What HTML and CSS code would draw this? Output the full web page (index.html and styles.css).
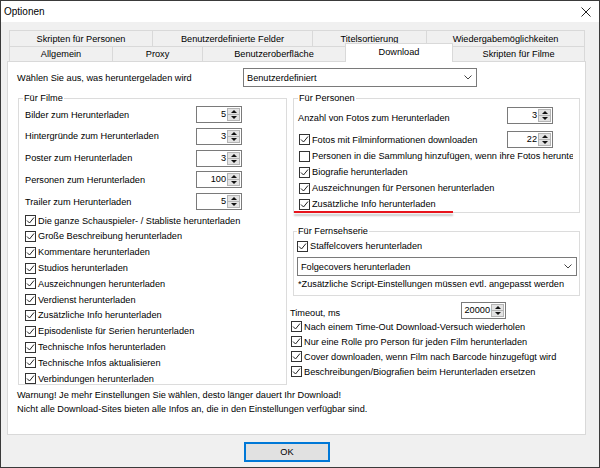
FILE: index.html
```html
<!DOCTYPE html>
<html lang="de">
<head>
<meta charset="utf-8">
<title>Optionen</title>
<link rel="stylesheet" href="styles.css">
</head>
<body>
<div class="window">
  <div class="titlebar">
    <span class="title">Optionen</span>
    <span class="close"><svg width="10" height="10" viewBox="0 0 10 10"><path d="M0.5 0.5L9.5 9.5M9.5 0.5L0.5 9.5" stroke="#222" stroke-width="1" fill="none"/></svg></span>
  </div>
  <div class="client">
    <div class="tabs">
      <div class="tabrow row1">
        <div class="tab t-skp">Skripten für Personen</div>
        <div class="tab t-bdf">Benutzerdefinierte Felder</div>
        <div class="tab t-tit">Titelsortierung</div>
        <div class="tab t-wie">Wiedergabemöglichkeiten</div>
      </div>
      <div class="tabrow row2">
        <div class="tab t-all">Allgemein</div>
        <div class="tab t-pro">Proxy</div>
        <div class="tab t-bob">Benutzeroberfläche</div>
        <div class="tab t-dl active">Download</div>
        <div class="tab t-skf">Skripten für Filme</div>
      </div>
    </div>
    <div class="panel">
      <div class="toprow">
        <span class="toplabel">Wählen Sie aus, was heruntergeladen wird</span>
        <div class="select sel-main"><span>Benutzerdefiniert</span><svg width="8" height="5" viewBox="0 0 8 5"><path d="M0.5 0.5L4 4L7.5 0.5" fill="none" stroke="#444" stroke-width="1"/></svg></div>
      </div>
      <div class="columns">
        <fieldset class="group g-filme">
          <legend>Für Filme</legend>
          <div class="spinrow"><span>Bilder zum Herunterladen</span><div class="spin"><span class="val">5</span><span class="arrows"><i class="up"></i><i class="down"></i></span></div></div>
          <div class="spinrow"><span>Hintergründe zum Herunterladen</span><div class="spin"><span class="val">3</span><span class="arrows"><i class="up"></i><i class="down"></i></span></div></div>
          <div class="spinrow"><span>Poster zum Herunterladen</span><div class="spin"><span class="val">3</span><span class="arrows"><i class="up"></i><i class="down"></i></span></div></div>
          <div class="spinrow"><span>Personen zum Herunterladen</span><div class="spin"><span class="val">100</span><span class="arrows"><i class="up"></i><i class="down"></i></span></div></div>
          <div class="spinrow"><span>Trailer zum Herunterladen</span><div class="spin"><span class="val">5</span><span class="arrows"><i class="up"></i><i class="down"></i></span></div></div>
          <div class="checks">
            <label class="chk"><span class="box"><svg width="9" height="9" viewBox="0 0 9 9"><path d="M1 4.5L3.5 7L8 1.5" fill="none" stroke="#222" stroke-width="1"/></svg></span>Die ganze Schauspieler- / Stabliste herunterladen</label>
            <label class="chk"><span class="box"><svg width="9" height="9" viewBox="0 0 9 9"><path d="M1 4.5L3.5 7L8 1.5" fill="none" stroke="#222" stroke-width="1"/></svg></span>Große Beschreibung herunterladen</label>
            <label class="chk"><span class="box"><svg width="9" height="9" viewBox="0 0 9 9"><path d="M1 4.5L3.5 7L8 1.5" fill="none" stroke="#222" stroke-width="1"/></svg></span>Kommentare herunterladen</label>
            <label class="chk"><span class="box"><svg width="9" height="9" viewBox="0 0 9 9"><path d="M1 4.5L3.5 7L8 1.5" fill="none" stroke="#222" stroke-width="1"/></svg></span>Studios herunterladen</label>
            <label class="chk"><span class="box"><svg width="9" height="9" viewBox="0 0 9 9"><path d="M1 4.5L3.5 7L8 1.5" fill="none" stroke="#222" stroke-width="1"/></svg></span>Auszeichnungen herunterladen</label>
            <label class="chk"><span class="box"><svg width="9" height="9" viewBox="0 0 9 9"><path d="M1 4.5L3.5 7L8 1.5" fill="none" stroke="#222" stroke-width="1"/></svg></span>Verdienst herunterladen</label>
            <label class="chk"><span class="box"><svg width="9" height="9" viewBox="0 0 9 9"><path d="M1 4.5L3.5 7L8 1.5" fill="none" stroke="#222" stroke-width="1"/></svg></span>Zusätzliche Info herunterladen</label>
            <label class="chk"><span class="box"><svg width="9" height="9" viewBox="0 0 9 9"><path d="M1 4.5L3.5 7L8 1.5" fill="none" stroke="#222" stroke-width="1"/></svg></span>Episodenliste für Serien herunterladen</label>
            <label class="chk"><span class="box"><svg width="9" height="9" viewBox="0 0 9 9"><path d="M1 4.5L3.5 7L8 1.5" fill="none" stroke="#222" stroke-width="1"/></svg></span>Technische Infos herunterladen</label>
            <label class="chk"><span class="box"><svg width="9" height="9" viewBox="0 0 9 9"><path d="M1 4.5L3.5 7L8 1.5" fill="none" stroke="#222" stroke-width="1"/></svg></span>Technische Infos aktualisieren</label>
            <label class="chk"><span class="box"><svg width="9" height="9" viewBox="0 0 9 9"><path d="M1 4.5L3.5 7L8 1.5" fill="none" stroke="#222" stroke-width="1"/></svg></span>Verbindungen herunterladen</label>
          </div>
        </fieldset>
        <div class="rightcol">
          <fieldset class="group g-pers">
            <legend>Für Personen</legend>
            <div class="prow prow1"><span class="plabel">Anzahl von Fotos zum Herunterladen</span><div class="spin"><span class="val">3</span><span class="arrows"><i class="up"></i><i class="down"></i></span></div></div>
            <div class="prow prow2"><label class="chk"><span class="box"><svg width="9" height="9" viewBox="0 0 9 9"><path d="M1 4.5L3.5 7L8 1.5" fill="none" stroke="#222" stroke-width="1"/></svg></span>Fotos mit Filminformationen downloaden</label><div class="spin"><span class="val">22</span><span class="arrows"><i class="up"></i><i class="down"></i></span></div></div>
            <div class="pchecks">
              <label class="chk clip"><span class="box"></span>Personen in die Sammlung hinzufügen, wenn ihre Fotos herunte</label>
              <label class="chk"><span class="box"><svg width="9" height="9" viewBox="0 0 9 9"><path d="M1 4.5L3.5 7L8 1.5" fill="none" stroke="#222" stroke-width="1"/></svg></span>Biografie herunterladen</label>
              <label class="chk"><span class="box"><svg width="9" height="9" viewBox="0 0 9 9"><path d="M1 4.5L3.5 7L8 1.5" fill="none" stroke="#222" stroke-width="1"/></svg></span>Auszeichnungen für Personen herunterladen</label>
              <label class="chk"><span class="box"><svg width="9" height="9" viewBox="0 0 9 9"><path d="M1 4.5L3.5 7L8 1.5" fill="none" stroke="#222" stroke-width="1"/></svg></span>Zusätzliche Info herunterladen</label>
            </div>
            <span class="mark"></span>
          </fieldset>
          <fieldset class="group g-tv">
            <legend>Für Fernsehserie</legend>
            <label class="chk"><span class="box"><svg width="9" height="9" viewBox="0 0 9 9"><path d="M1 4.5L3.5 7L8 1.5" fill="none" stroke="#222" stroke-width="1"/></svg></span>Staffelcovers herunterladen</label>
            <div class="select sel-tv"><span>Folgecovers herunterladen</span><svg width="8" height="5" viewBox="0 0 8 5"><path d="M0.5 0.5L4 4L7.5 0.5" fill="none" stroke="#444" stroke-width="1"/></svg></div>
            <div class="note">*Zusätzliche Script-Einstellungen müssen evtl. angepasst werden</div>
          </fieldset>
          <div class="timeout">
            <div class="trow"><span class="tlabel">Timeout, ms</span><div class="spin"><span class="val">20000</span><span class="arrows"><i class="up"></i><i class="down"></i></span></div></div>
            <label class="chk"><span class="box"><svg width="9" height="9" viewBox="0 0 9 9"><path d="M1 4.5L3.5 7L8 1.5" fill="none" stroke="#222" stroke-width="1"/></svg></span>Nach einem Time-Out Download-Versuch wiederholen</label>
            <label class="chk"><span class="box"><svg width="9" height="9" viewBox="0 0 9 9"><path d="M1 4.5L3.5 7L8 1.5" fill="none" stroke="#222" stroke-width="1"/></svg></span>Nur eine Rolle pro Person für jeden Film herunterladen</label>
            <label class="chk"><span class="box"><svg width="9" height="9" viewBox="0 0 9 9"><path d="M1 4.5L3.5 7L8 1.5" fill="none" stroke="#222" stroke-width="1"/></svg></span>Cover downloaden, wenn Film nach Barcode hinzugefügt wird</label>
            <label class="chk"><span class="box"><svg width="9" height="9" viewBox="0 0 9 9"><path d="M1 4.5L3.5 7L8 1.5" fill="none" stroke="#222" stroke-width="1"/></svg></span>Beschreibungen/Biografien beim Herunterladen ersetzen</label>
          </div>
        </div>
      </div>
      <div class="warn">
        <div>Warnung! Je mehr Einstellungen Sie wählen, desto länger dauert Ihr Download!</div>
        <div>Nicht alle Download-Sites bieten alle Infos an, die in den Einstellungen verfügbar sind.</div>
      </div>
    </div>
    <div class="buttons"><button class="ok" type="button">OK</button></div>
  </div>
</div>
</body>
</html>
```
FILE: styles.css
```css
* { box-sizing: border-box; }
html, body { margin: 0; padding: 0; }
body {
  width: 600px;
  height: 468px;
  overflow: hidden;
  background: #fff;
  font-family: "Liberation Sans", Arial, sans-serif;
  font-size: 9.2px;
  color: #000;
}
.window {
  width: 600px;
  height: 468px;
  border: 1px solid #3a3a3a;
  background: #f0f0f0;
  display: flex;
  flex-direction: column;
}
.titlebar {
  flex: none;
  height: 21px;
  background: #fff;
  display: flex;
  align-items: center;
  justify-content: space-between;
  padding: 0 8px 0 3px;
}
.title { font-size: 10px; }
.close { display: flex; width: 10px; height: 10px; }

.client { flex: 1; padding: 8px 0 0 6px; }

/* tabs */
.tabs { margin-left: 2px; width: 575px; }
.tabrow { display: flex; }
.row1 { height: 16px; }
.row2 { height: 15px; }
.tab {
  flex: none;
  display: flex;
  align-items: center;
  justify-content: center;
  white-space: nowrap;
  border: 1px solid #d9d9d9;
  border-bottom: none;
  margin-right: -1px;
  background: #f0f0f0;
}
.t-skp { width: 144px; }
.t-bdf { width: 161px; }
.t-tit { width: 115px; }
.t-wie { width: 159px; }
.t-all { width: 104px; }
.t-pro { width: 91px; }
.t-bob { width: 144px; }
.t-dl  { width: 108px; }
.t-skf { width: 133px; }
.tab.active {
  position: relative;
  z-index: 1;
  background: #fff;
  height: 19px;
  margin-top: -3px;
  padding-bottom: 3px;
}

/* panel */
.panel {
  width: 579px;
  height: 374px;
  background: #fff;
  border: 1px solid #d9d9d9;
  padding: 6px 0 0 9px;
}
.toprow { display: flex; align-items: center; height: 19px; }
.toplabel { width: 226px; flex: none; }
.select {
  display: flex;
  align-items: center;
  justify-content: space-between;
  background: #fff;
  border: 1px solid #7a7a7a;
  padding: 0 4px 0 3px;
  white-space: nowrap;
}
.sel-main { width: 234px; height: 19px; }
.sel-tv { width: 280px; height: 19px; margin-top: 3px; }

.columns { display: flex; gap: 3px; margin: 5px 0 0 1px; align-items: flex-start; }

.group {
  margin: 0;
  min-width: 0;
  border: 1px solid #dcdcdc;
}
.group legend {
  padding: 0 1px;
  line-height: 12px;
}
.g-filme { width: 269px; padding: 2px 0 0 6px; height: 293px; }
.g-filme legend { margin-left: -2px; }

.spinrow {
  display: grid;
  grid-template-columns: 171px 46px;
  align-items: center;
  height: 17px;
  margin-bottom: 4.75px;
}
.spinrow:last-of-type { margin-bottom: 0; }

.spin {
  display: flex;
  height: 17px;
  border: 1px solid #7a7a7a;
  background: #fff;
}
.spin .val { flex: 1; text-align: right; line-height: 15px; padding-right: 1px; }
.arrows {
  flex: none;
  width: 13px;
  display: flex;
  flex-direction: column;
  margin: 1px 1px 1px 0;
}
.arrows i {
  flex: 1;
  display: flex;
  align-items: center;
  justify-content: center;
  background: #e3e3e3;
  border: 1px solid #b4b4b4;
}
.arrows i + i { border-top: none; }
.arrows .up::before {
  content: "";
  border-left: 3px solid transparent;
  border-right: 3px solid transparent;
  border-bottom: 3px solid #111;
}
.arrows .down::before {
  content: "";
  border-left: 3px solid transparent;
  border-right: 3px solid transparent;
  border-top: 3px solid #111;
}

.checks { margin-top: -2px; }
.checks .chk { height: 15.8px; }
.chk {
  display: flex;
  align-items: center;
  white-space: nowrap;
}
.box {
  flex: none;
  width: 11px;
  height: 11px;
  border: 1px solid #333;
  background: #fff;
  margin-right: 2px;
  display: flex;
  align-items: center;
  justify-content: center;
}

/* right column */
.rightcol { width: 290px; }
.g-pers {
  position: relative;
  width: 287px;
  margin-left: 3px;
  padding: 3px 0 0 4px;
}
.prow { display: grid; grid-template-columns: 209px 46px; height: 17px; }
.prow1 { align-items: end; }
.prow1 .plabel { line-height: 11px; }
.prow2 { align-items: center; margin-top: 7px; }
.prow2 .chk { margin-left: 1px; }
.pchecks { margin-left: 1px; }
.pchecks .chk { height: 16px; }
.clip { width: 274px; overflow: hidden; }
.mark {
  position: absolute;
  left: 0;
  bottom: -1px;
  width: 159px;
  height: 2px;
  background: #e8141c;
  box-shadow: 0 3px 2px rgba(0, 0, 0, 0.22);
}

.g-tv {
  width: 287px;
  margin: 12px 0 0 3px;
  padding: 1px 0 4px 3px;
}
.g-tv legend { margin-left: 0; }
.g-tv .chk { height: 16px; }
.note { line-height: 14px; margin-top: 1px; padding-left: 1px; white-space: nowrap; }

.timeout { margin-top: 6px; }
.trow { display: grid; grid-template-columns: 171px 45px; align-items: end; height: 17px; }
.tlabel { line-height: 12px; }
.timeout .chk { height: 15px; margin-left: 1px; }

.warn { margin-top: 3px; line-height: 14px; white-space: nowrap; }

.buttons { padding-left: 237px; margin-top: 7px; }
.ok {
  width: 86px;
  height: 20px;
  margin: 0;
  padding: 0;
  font: inherit;
  color: #000;
  background: #e1e1e1;
  border: 1px solid #0078d7;
  box-shadow: inset 0 0 0 1px #0078d7;
}
```
